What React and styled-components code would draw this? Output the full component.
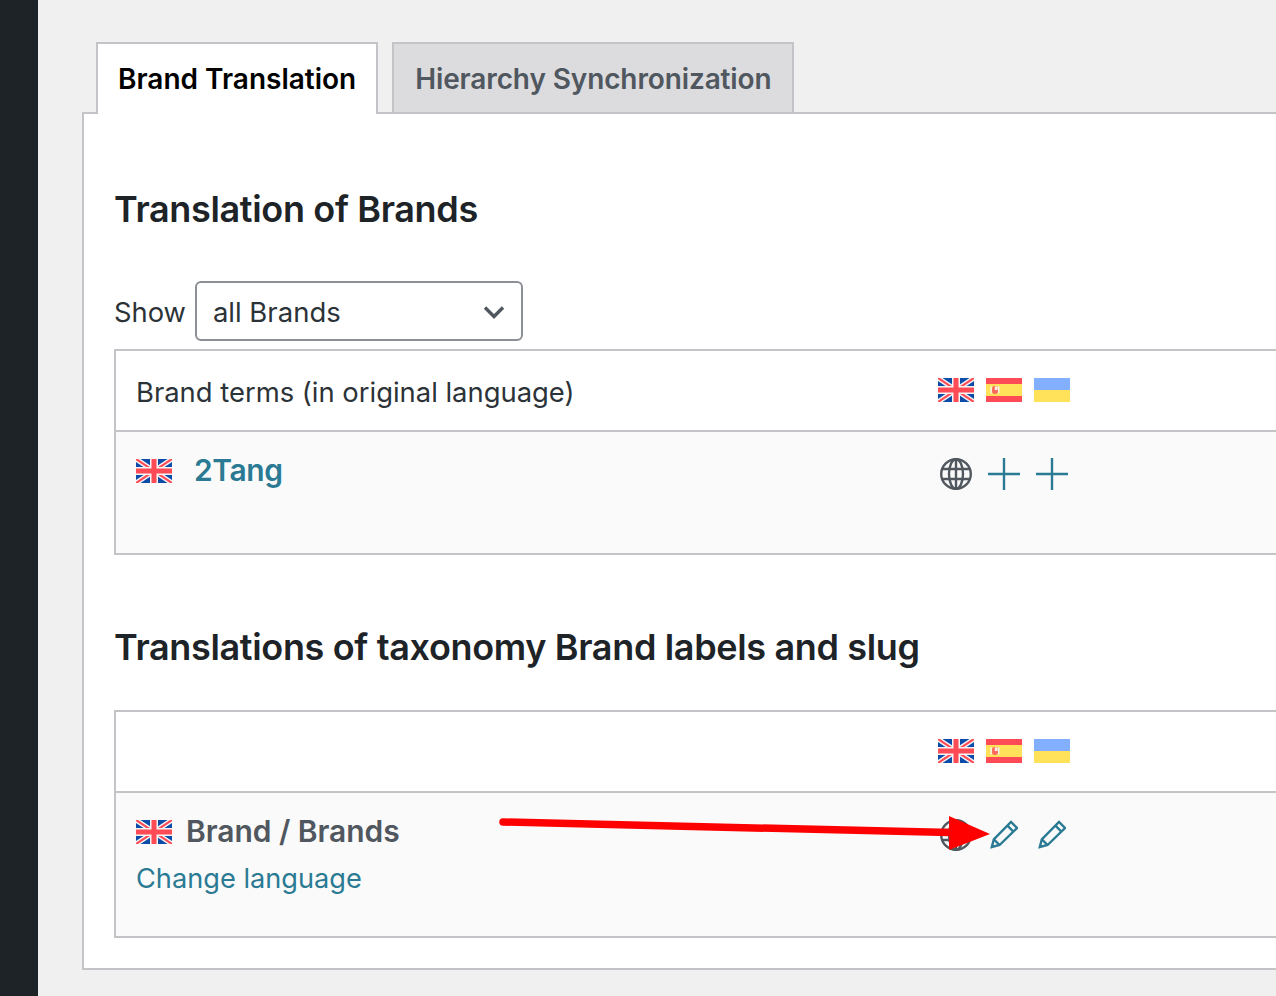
import React from 'react';
import styled, { createGlobalStyle } from 'styled-components';

const GlobalStyle = createGlobalStyle`
    html, body {
        margin: 0;
        padding: 0;
        height: 996px;
        overflow: hidden;
        background: #f0f0f1;
    }
    * {
        box-sizing: border-box;
    }
`;

const Page = styled.div`
    position: relative;
    display: flex;
    width: 1276px;
    height: 996px;
    overflow: hidden;
    font-family: Inter, "Liberation Sans", sans-serif;
    color: #1d2327;
`;

const Sidebar = styled.div`
    flex: 0 0 38px;
    background: #1d2327;
`;

const Main = styled.main`
    flex: 0 0 1400px;
    padding: 42px 0 0 44px;
`;

const Tabs = styled.nav`
    display: flex;
    align-items: flex-start;
    gap: 14px;
    padding-left: 14px;
    height: 72px;
    margin-bottom: -2px;
    position: relative;
    z-index: 1;
`;

const Tab = styled.div`
    display: flex;
    align-items: center;
    padding: ${p => (p.$active ? '0 20px 0 20px' : '2px 20px 0 21px')};
    height: ${p => (p.$active ? '72px' : '70px')};
    border: 2px solid #c3c4c7;
    border-bottom: none;
    background: ${p => (p.$active ? '#fff' : '#dcdcde')};
    color: ${p => (p.$active ? '#000' : '#50575e')};
    font-size: 28px;
    font-weight: 600;
    letter-spacing: ${p => (p.$active ? '0' : '-0.12px')};
`;

const Panel = styled.section`
    height: 858px;
    padding: 0 0 0 30px;
    background: #fff;
    border: 2px solid #c3c4c7;
`;

const Title = styled.h2`
    margin: 0;
    font-size: 36px;
    line-height: 46px;
    font-weight: 600;
    letter-spacing: -0.34px;
    color: #1d2327;
`;

const FirstTitle = styled(Title)`
    padding-top: 72px;
`;

const SecondTitle = styled(Title)`
    margin-top: 69px;
`;

const Filter = styled.div`
    display: flex;
    align-items: center;
    gap: 9px;
    margin-top: 49px;
    font-size: 27.3px;
    color: #2c3338;
`;

const ShowLabel = styled.span`
    padding-top: 2px;
`;

const Select = styled.div`
    display: flex;
    align-items: center;
    justify-content: space-between;
    width: 328px;
    height: 60px;
    padding: 2px 15px 0 16px;
    border: 2px solid #8c8f94;
    border-radius: 6px;
    background: #fff;
    font-size: 27.5px;
`;

const Table = styled.div`
    margin-top: ${p => p.$top}px;
    border: 2px solid #c3c4c7;
    background: #fff;
`;

const HeadRow = styled.div`
    display: grid;
    grid-template-columns: 802px auto;
    align-items: start;
    height: 81px;
    padding: 27px 0 0 20px;
    border-bottom: 2px solid #c3c4c7;
    font-size: 27.4px;
    color: #2c3338;
`;

const HeadLabel = styled.div`
    margin-top: -3px;
    line-height: 34px;
`;

const BodyRow = styled.div`
    display: grid;
    grid-template-columns: 802px auto;
    height: ${p => p.$height}px;
    padding: 27px 0 0 20px;
    background: #fafafa;
`;

const Slots = styled.div`
    display: flex;
    gap: 12px;
    align-self: start;
`;

const IconSlots = styled(Slots)`
    margin-top: -1px;
`;

const Slot = styled.div`
    display: flex;
    justify-content: center;
    width: 36px;
`;

const NameLine = styled.div`
    display: flex;
    align-items: flex-start;
    gap: ${p => p.$gap}px;
    height: 29px;
`;

const TermLink = styled.a`
    margin-top: -9px;
    font-size: 30px;
    line-height: 40px;
    font-weight: 600;
    letter-spacing: -0.4px;
    color: #2b7a94;
`;

const TermName = styled.strong`
    margin-top: -9px;
    font-size: 30px;
    line-height: 40px;
    font-weight: 600;
    letter-spacing: -0.05px;
    color: #50575e;
`;

const ChangeLink = styled.a`
    display: block;
    margin-top: 13px;
    font-size: 27.2px;
    line-height: 34px;
    color: #2b7a94;
`;

const FlagSvg = styled.svg`
    display: block;
    flex: none;
    width: 36px;
    height: 24px;
`;

const Arrow = styled.svg`
    position: absolute;
    left: 0;
    top: 0;
    pointer-events: none;
`;

const UkFlag = () => (
    <FlagSvg viewBox="0 0 36 24">
        <rect width="36" height="24" fill="#0d4ba8" />
        <path d="M0 0 36 24M36 0 0 24" stroke="#f5f5f5" strokeWidth="5" />
        <path d="M0 0 36 24M36 0 0 24" stroke="#ff4b55" strokeWidth="2.2" />
        <path d="M18 0V24M0 12H36" stroke="#f5f5f5" strokeWidth="8" />
        <path d="M18 0V24M0 12H36" stroke="#ff4b55" strokeWidth="5" />
    </FlagSvg>
);

const EsFlag = () => (
    <FlagSvg viewBox="0 0 36 24">
        <rect width="36" height="24" fill="#ff4b55" />
        <rect y="6" width="36" height="12" fill="#ffe15a" />
        <rect x="4.4" y="8.5" width="1.4" height="7" fill="#f5f5f5" />
        <rect x="12" y="8.5" width="1.4" height="7" fill="#f5f5f5" />
        <rect x="6" y="8" width="6" height="8" rx="2.4" fill="#ff6b5e" />
        <rect x="8.8" y="8.4" width="2.8" height="3.6" fill="#fbeee0" />
    </FlagSvg>
);

const UaFlag = () => (
    <FlagSvg viewBox="0 0 36 24">
        <rect width="36" height="12" fill="#82afff" />
        <rect y="12" width="36" height="12" fill="#ffe15a" />
    </FlagSvg>
);

const Flags = () => (
    <Slots>
        <Slot><UkFlag /></Slot>
        <Slot><EsFlag /></Slot>
        <Slot><UaFlag /></Slot>
    </Slots>
);

const GlobeIcon = () => (
    <svg width="32" height="32" viewBox="0 0 32 32" fill="none" stroke="#50575e" strokeWidth="2.4">
        <circle cx="16" cy="16" r="14.8" />
        <ellipse cx="16" cy="16" rx="7" ry="14.8" />
        <path d="M16 1V31M2.5 11H29.5M2.5 21H29.5" />
    </svg>
);

const PlusIcon = () => (
    <svg width="32" height="32" viewBox="0 0 32 32" fill="none" stroke="#2b7a94" strokeWidth="2.4">
        <path d="M16 0V32M0 16H32" />
    </svg>
);

const PencilIcon = () => (
    <svg width="28" height="30" viewBox="0 0 28 30" fill="none" stroke="#2b7a94" strokeWidth="2.4">
        <path d="M1.8 28 3.8 20.4 21 3 27 9 9.6 26Z" />
        <path d="M3.8 20.4 9.6 26M17.4 6.6 23.4 12.6" />
    </svg>
);

const Chevron = () => (
    <svg width="24" height="24" viewBox="0 0 24 24" fill="none" stroke="#50575e" strokeWidth="3.4">
        <path d="M3 7.5 12 16.5 21 7.5" />
    </svg>
);

function App() {
    return (
        <Page>
            <GlobalStyle />
            <Sidebar />
            <Main>
                <Tabs>
                    <Tab $active>Brand Translation</Tab>
                    <Tab>Hierarchy Synchronization</Tab>
                </Tabs>
                <Panel>
                    <FirstTitle>Translation of Brands</FirstTitle>
                    <Filter>
                        <ShowLabel>Show</ShowLabel>
                        <Select>
                            <span>all Brands</span>
                            <Chevron />
                        </Select>
                    </Filter>
                    <Table $top={8}>
                        <HeadRow>
                            <HeadLabel>Brand terms (in original language)</HeadLabel>
                            <Flags />
                        </HeadRow>
                        <BodyRow $height={121}>
                            <NameLine $gap={22}>
                                <UkFlag />
                                <TermLink>2Tang</TermLink>
                            </NameLine>
                            <IconSlots>
                                <Slot><GlobeIcon /></Slot>
                                <Slot><PlusIcon /></Slot>
                                <Slot><PlusIcon /></Slot>
                            </IconSlots>
                        </BodyRow>
                    </Table>
                    <SecondTitle>Translations of taxonomy Brand labels and slug</SecondTitle>
                    <Table $top={40}>
                        <HeadRow>
                            <div />
                            <Flags />
                        </HeadRow>
                        <BodyRow $height={143}>
                            <div>
                                <NameLine $gap={14}>
                                    <UkFlag />
                                    <TermName>Brand / Brands</TermName>
                                </NameLine>
                                <ChangeLink>Change language</ChangeLink>
                            </div>
                            <IconSlots>
                                <Slot><GlobeIcon /></Slot>
                                <Slot><PencilIcon /></Slot>
                                <Slot><PencilIcon /></Slot>
                            </IconSlots>
                        </BodyRow>
                    </Table>
                </Panel>
            </Main>
            <Arrow width="1276" height="996" viewBox="0 0 1276 996">
                <path d="M503 822 950 832.5" stroke="#ff0000" strokeWidth="7.5" strokeLinecap="round" />
                <path d="M949 816 990 834 949 850Z" fill="#ff0000" />
            </Arrow>
        </Page>
    );
}

export default App;
